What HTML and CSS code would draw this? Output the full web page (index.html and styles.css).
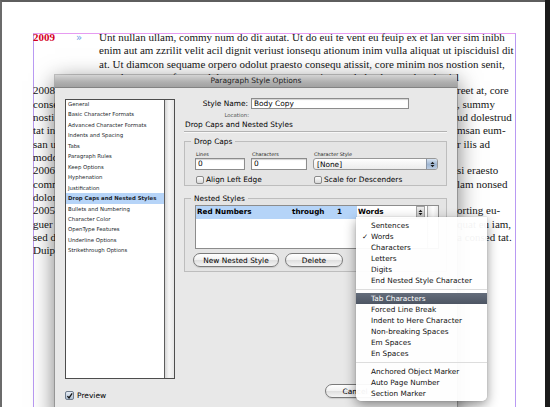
FILE: index.html
```html
<!DOCTYPE html>
<html>
<head>
<meta charset="utf-8">
<title>Paragraph Style Options</title>
<link rel="stylesheet" href="styles.css">
</head>
<body>
<div class="screen">
  <div class="page">
    <div class="frame">
      <div class="story">
        <div class="line lead"><span class="yr">2009</span><span class="tab">»</span><span>Unt nullan ullam, commy num do dit autat. Ut do eui te vent eu feuip ex et lan ver sim inibh</span></div>
        <div class="line ind">enim aut am zzrilit velit acil dignit veriust ionsequ ationum inim vulla aliquat ut ipisciduisl dit</div>
        <div class="line ind">at. Ut diamcon sequame orpero odolut praesto consequ atissit, core minim nos nostion senit,</div>
        <div class="line ind">quat lore magna feugue dolorper sequam, quatum ing esed elendre tat ulput lortisl</div>
        <div class="line split"><span class="a">2008</span><span class="b">reet at, core</span></div>
        <div class="line split"><span class="a">conse</span><span class="b">, summy</span></div>
        <div class="line split"><span class="a">nosti</span><span class="b">ud dolestrud</span></div>
        <div class="line split"><span class="a">tat in</span><span class="b">msan eum-</span></div>
        <div class="line split"><span class="a">san u</span><span class="b">r ilis ad</span></div>
        <div class="line split"><span class="a">modo</span><span class="b"></span></div>
        <div class="line split"><span class="a">2006</span><span class="b">si eraesto</span></div>
        <div class="line split"><span class="a">comm</span><span class="b">lam nonsed</span></div>
        <div class="line split"><span class="a">dolor</span><span class="b"></span></div>
        <div class="line split"><span class="a">2005</span><span class="b">orting eu-</span></div>
        <div class="line split"><span class="a">guer</span><span class="b">quat eu iam,</span></div>
        <div class="line split"><span class="a">sed d</span><span class="b">a consed tat.</span></div>
        <div class="line split"><span class="a">Duip</span><span class="b"></span></div>
      </div>
    </div>
  </div>

  <div class="dialog">
    <div class="titlebar">Paragraph Style Options</div>
    <div class="dbody">
      <div class="sidebar">
        <div class="list">
          <ul class="items">
            <li>General</li>
            <li>Basic Character Formats</li>
            <li>Advanced Character Formats</li>
            <li>Indents and Spacing</li>
            <li>Tabs</li>
            <li>Paragraph Rules</li>
            <li>Keep Options</li>
            <li>Hyphenation</li>
            <li>Justification</li>
            <li class="sel">Drop Caps and Nested Styles</li>
            <li>Bullets and Numbering</li>
            <li>Character Color</li>
            <li>OpenType Features</li>
            <li>Underline Options</li>
            <li>Strikethrough Options</li>
          </ul>
          <div class="track"></div>
        </div>
        <div class="check preview"><span class="cb on"><svg viewBox="0 0 10 10" width="8" height="8"><path d="M2 5.2 L4.3 7.8 L8.8 1.4" fill="none" stroke="#151515" stroke-width="1.9"/></svg></span>Preview</div>
      </div>

      <div class="pane">
        <div class="namerow"><span class="namelbl">Style Name:</span><span class="field name">Body Copy</span></div>
        <div class="loc">Location:</div>
        <div class="heading">Drop Caps and Nested Styles</div>

        <fieldset class="group dropcaps">
          <legend>Drop Caps</legend>
          <div class="dcgrid">
            <span class="tiny">Lines</span>
            <span class="tiny">Characters</span>
            <span class="tiny">Character Style</span>
            <span class="field">0</span>
            <span class="field">0</span>
            <span class="select">[None]<span class="stepper aqua"><svg viewBox="0 0 6 8" width="5" height="7"><path d="M3 0.6 L5.4 3.3 H0.6Z M3 7.4 L5.4 4.7 H0.6Z" fill="#1c1c1c"/></svg></span></span>
            <div class="check wide"><span class="cb"></span>Align Left Edge</div>
            <div class="check"><span class="cb"></span>Scale for Descenders</div>
          </div>
        </fieldset>

        <fieldset class="group nested">
          <legend>Nested Styles</legend>
          <div class="ntable">
            <div class="nrows">
              <div class="nrow">
                <span class="c">Red Numbers</span>
                <span class="c">through</span>
                <span class="c">1</span>
                <span class="wsel">Words<span class="stepper gray"><svg viewBox="0 0 6 8" width="5" height="7"><path d="M3 0.6 L5.4 3.3 H0.6Z M3 7.4 L5.4 4.7 H0.6Z" fill="#1c1c1c"/></svg></span>
                  <div class="menu">
                    <div class="mi">Sentences</div>
                    <div class="mi"><span class="tick">✓</span>Words</div>
                    <div class="mi">Characters</div>
                    <div class="mi">Letters</div>
                    <div class="mi">Digits</div>
                    <div class="mi">End Nested Style Character</div>
                    <div class="msep"></div>
                    <div class="mi hot">Tab Characters</div>
                    <div class="mi">Forced Line Break</div>
                    <div class="mi">Indent to Here Character</div>
                    <div class="mi">Non-breaking Spaces</div>
                    <div class="mi">Em Spaces</div>
                    <div class="mi">En Spaces</div>
                    <div class="msep"></div>
                    <div class="mi">Anchored Object Marker</div>
                    <div class="mi">Auto Page Number</div>
                    <div class="mi">Section Marker</div>
                  </div>
                </span>
              </div>
            </div>
            <div class="vscroll"></div>
          </div>
          <div class="nbtns">
            <button class="btn new">New Nested Style</button>
            <button class="btn del">Delete</button>
          </div>
        </fieldset>

        <div class="actions">
          <button class="btn cancel">Cancel</button>
        </div>
      </div>
    </div>
  </div>
</div>
</body>
</html>
```

FILE: styles.css
```css
* { box-sizing: border-box; }
html, body { margin: 0; padding: 0; }
body {
  width: 550px;
  height: 407px;
  overflow: hidden;
  background: #1b1b1b;
  font-family: "DejaVu Sans", sans-serif;
}
.screen { position: relative; width: 550px; height: 407px; }

/* ---------- document page ---------- */
.page {
  width: 545px;
  height: 407px;
  overflow: hidden;
  background: #fff;
  border-top: 2px solid #5e5e5e;
  border-left: 2px solid #6b6b6b;
  padding: 31px 0 0 31px;
}
.frame {
  width: 483px;
  height: 380px;
  border: 1px solid #b99af3;
  border-top-color: #e69bf1;
  border-bottom: 0;
}
.story {
  margin: -3px 0 0 -1px;
  font: 11px/13.33px "Liberation Serif", serif;
  color: #161616;
}
.line { height: 13.33px; white-space: nowrap; overflow: hidden; }
.lead { display: flex; }
.yr { width: 43px; color: #d4001f; font-weight: bold; }
.tab { width: 23px; color: #6f9ee6; font-size: 10px; font-family: "DejaVu Sans", sans-serif; }
.ind { padding-left: 66px; }
.split { display: grid; grid-template-columns: 22px 402px auto; }
.split .a { grid-column: 1; overflow: hidden; }
.split .b { grid-column: 3; overflow: hidden; }

/* ---------- dialog ---------- */
.dialog {
  position: absolute;
  left: 55px;
  top: 75px;
  width: 402px;
  height: 345px;
  background: #e8e8e8;
  box-shadow: 0 6px 22px rgba(0, 0, 0, 0.55), 0 0 0 1px rgba(0, 0, 0, 0.2);
  font-size: 7.4px;
  color: #000;
}
.titlebar {
  height: 13px;
  line-height: 12px;
  text-align: center;
  color: #1e1e1e;
  font-size: 7.5px;
  background: linear-gradient(#d4d4d4, #afafaf 60%, #a2a2a2);
  border-bottom: 1px solid #838383;
}
.dbody { display: flex; gap: 9px; padding: 10px 10px 0 10px; }

.sidebar { width: 110px; margin-top: 1px; }
.list {
  height: 280px;
  display: flex;
  background: #fff;
  border: 1px solid #4d4d4d;
}
.items {
  flex: 1;
  list-style: none;
  margin: -1px 0 0 0;
  padding: 0;
}
.items li {
  font-size: 5.4px;
  line-height: 10.45px;
  padding-left: 2px;
  white-space: nowrap;
  color: #1c1f2c;
}
.items li.sel { background: #b6d4f8; font-weight: bold; }
.track {
  width: 10px;
  border-left: 1px solid #5d5d5d;
  background: linear-gradient(90deg, #d6d6d6, #f6f6f6 45%, #e6e6e6);
}

.check { display: flex; align-items: center; gap: 2px; white-space: nowrap; }
.cb {
  width: 8px;
  height: 8px;
  flex: none;
  border: 1px solid #8a8a8a;
  border-radius: 2px;
  background: linear-gradient(#fdfdfd, #d8d8d8);
  display: flex;
  align-items: center;
  justify-content: center;
}
.cb.on {
  width: 9px;
  height: 9px;
  background: linear-gradient(#e6edf5, #aebfd3);
  border-color: #6f7c8c;
}
.preview { margin-top: 12px; gap: 3px; font-size: 7.5px; }

/* ---------- right pane ---------- */
.pane { width: 263px; }
.namerow { display: flex; align-items: center; gap: 3px; }
.namelbl { width: 64px; text-align: right; white-space: nowrap; }
.field {
  display: block;
  height: 12px;
  line-height: 10px;
  padding-left: 2px;
  background: #fff;
  border: 1px solid #8c8c8c;
  box-shadow: inset 0 1px 1px rgba(0, 0, 0, 0.18);
}
.field.name { width: 158px; height: 11px; line-height: 9px; }
.loc {
  width: 65px;
  text-align: right;
  font-size: 5.4px;
  line-height: 6px;
  color: #555;
  margin-top: 3px;
}
.heading {
  margin-top: 2px;
  line-height: 10px;
  padding: 0 0 1px 1px;
  border-bottom: 1px solid #b2b2b2;
  box-shadow: 0 1px 0 #f7f7f7;
  white-space: nowrap;
}

.group {
  margin: 0;
  min-width: 0;
  border: 1px solid #bdbdbd;
  background: rgba(0, 0, 0, 0.015);
  padding: 5px 8px 2px 10px;
}
.group legend {
  padding: 0 3px;
  margin-left: -4px;
  line-height: 9px;
  font-size: 7.4px;
}
.dropcaps { margin-top: 5px; }
.dcgrid {
  display: grid;
  grid-template-columns: 50px 56px 125px;
  column-gap: 6px;
  grid-template-rows: 6px 12px 12px;
  row-gap: 1px;
}
.dcgrid .check { margin-top: 5px; margin-left: 1px; }
.dcgrid .wide { grid-column: 1 / span 2; }
.tiny { font-size: 4.9px; line-height: 6px; padding-left: 1px; white-space: nowrap; color: #222; }
.select {
  position: relative;
  display: flex;
  align-items: center;
  height: 12px;
  padding-left: 3px;
  border: 1px solid #979797;
  border-radius: 3px;
  background: linear-gradient(#fefefe, #ececec);
}
.stepper {
  position: absolute;
  right: 0;
  top: 0;
  bottom: 0;
  width: 11px;
  display: flex;
  align-items: center;
  justify-content: center;
  border-left: 1px solid #8b97a8;
}
.stepper.aqua {
  border-radius: 0 2px 2px 0;
  background: linear-gradient(#d7e3f1, #9fb6d2 55%, #bccde2);
}
.stepper.gray {
  width: 9px;
  right: 2px;
  border: 1px solid #a2a2a2;
  background: linear-gradient(#eeeeee, #c4c4c4);
}

.nested { margin-top: 8px; padding: 2px 8px 4px 10px; }
.ntable {
  width: 244px;
  height: 44px;
  display: flex;
  background: #fff;
  border: 1px solid #8c8c8c;
}
.nrows { flex: 1; }
.nrow {
  display: grid;
  grid-template-columns: 95px 45px 21px 1fr;
  height: 12px;
  line-height: 12px;
  font-weight: bold;
  font-size: 7.2px;
}
.nrow .c { background: #b5d4f8; padding-left: 1px; white-space: nowrap; }
.wsel {
  position: relative;
  background: #fff;
  padding-left: 1px;
  border-bottom: 1px solid #c9c9c9;
}
.vscroll {
  width: 11px;
  border-left: 1px solid #a6a6a6;
  background: linear-gradient(90deg, #ececec, #fdfdfd 50%, #ececec);
}

.nbtns { display: flex; gap: 6px; margin: 4px 0 0 -2px; }
.btn {
  height: 14px;
  padding: 0;
  font: 7.4px "DejaVu Sans", sans-serif;
  color: #000;
  border: 1px solid #7a7a7a;
  border-radius: 7px;
  background: linear-gradient(#ffffff, #f1f1f1 50%, #dedede 51%, #f4f4f4);
  box-shadow: 0 1px 1px rgba(0, 0, 0, 0.12);
}
.btn.new { width: 86px; }
.btn.del { width: 58px; }
.actions { display: flex; justify-content: flex-end; margin-top: 112px; padding-right: 62px; }
.btn.cancel { width: 60px; }

/* ---------- popup menu ---------- */
.menu {
  position: absolute;
  left: -1px;
  top: 11px;
  z-index: 10;
  width: 131px;
  padding: 3px 0 2px;
  background: rgba(255, 255, 255, 0.95);
  border-radius: 0 0 5px 5px;
  box-shadow: 0 4px 12px rgba(0, 0, 0, 0.42), 0 0 1px rgba(0, 0, 0, 0.35);
  font-weight: normal;
  font-size: 7.3px;
  color: #111;
}
.mi {
  position: relative;
  height: 11px;
  line-height: 11px;
  padding-left: 15px;
  white-space: nowrap;
}
.tick { position: absolute; left: 6px; top: 0; }
.mi.hot {
  color: #fff;
  background: linear-gradient(#646d7b, #4d5563);
}
.msep { margin: 3px 0; border-top: 1px solid #dddddd; }
```
